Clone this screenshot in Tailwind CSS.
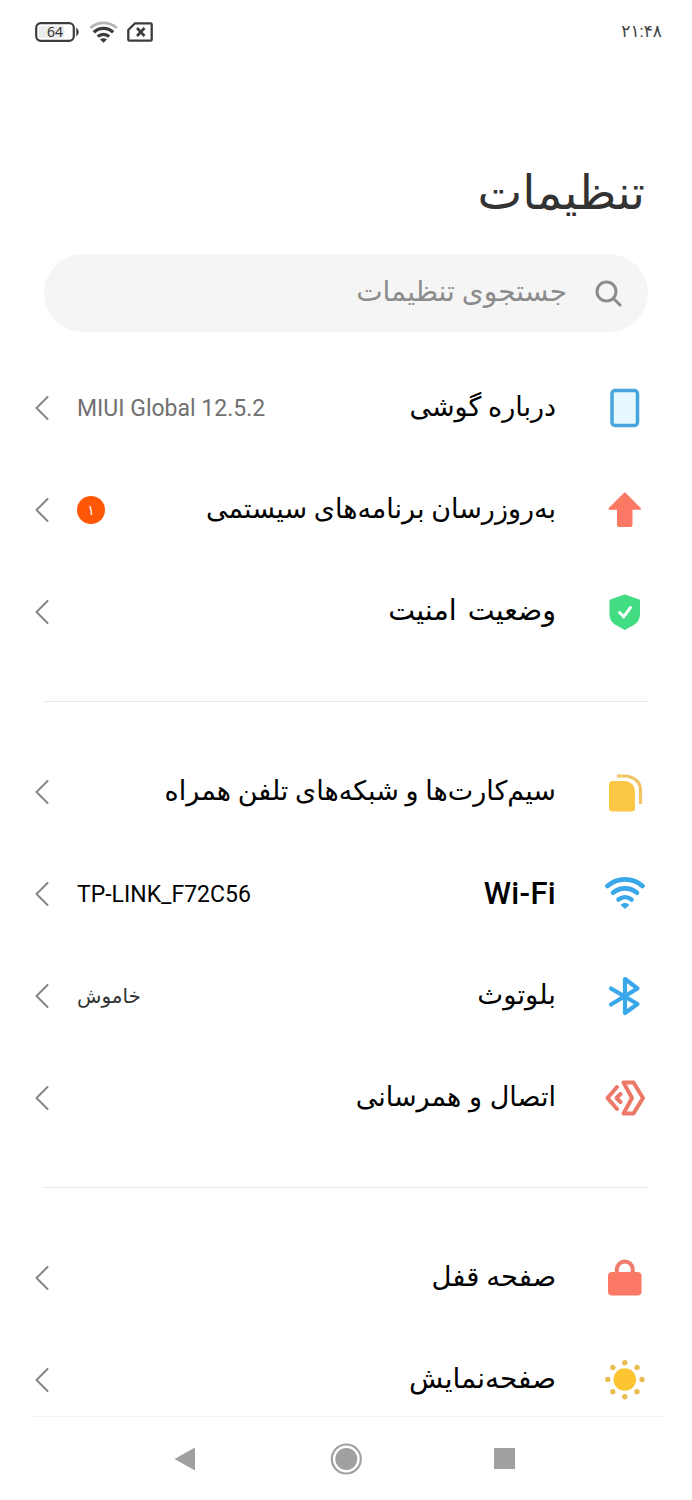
<!DOCTYPE html>
<html lang="fa" dir="rtl">
<head>
<meta charset="utf-8">
<title>تنظیمات</title>
<script src="https://cdn.jsdelivr.net/npm/@tailwindcss/browser@4"></script>
</head>
<body class="bg-white font-[Roboto,'DejaVu_Sans',sans-serif] text-black">
<svg class="hidden"><symbol id="chev" viewBox="0 0 14 24"><path d="M12.5 1 1.500 12l11 11" fill="none" stroke="#858585" stroke-width="2" stroke-linecap="round" stroke-linejoin="round"/></symbol></svg>
<div class="flex h-[1500px] w-[692px] flex-col overflow-hidden">
  <header class="flex h-16 shrink-0 items-center justify-between pr-[30px] pl-[35px] text-[#444]">
    <span class="text-[17px]">۲۱:۴۸</span>
    <div class="flex items-center gap-[9px]" dir="ltr">
      <svg class="h-5 w-[45px]" viewBox="0 0 45 20"><rect x="1.200" y="1.200" width="37.600" height="17.600" rx="4.500" fill="#fff" stroke="#3c3c3c" stroke-width="2.200"/><path d="M4 4h25v12H4z" fill="#ececec"/><path d="M42 7.500q2 2.500 0 5z" fill="#3c3c3c" stroke="#3c3c3c" stroke-width="1.500"/><text x="20" y="15" text-anchor="middle" font-family="Noto Sans" font-size="14" fill="#333">64</text></svg>
      <svg class="h-[22px] w-[29px]" viewBox="0 0 29 22" fill="none" stroke="#3c3c3c" stroke-width="3.300"><path d="M1.300 7a19.500 19.500 0 0 1 26.400 0" stroke="#b5b5b5" stroke-width="2.800"/><path d="M4.800 11.300a14 14 0 0 1 19.400 0"/><path d="M8.800 15.600a8.500 8.500 0 0 1 11.400 0"/><path d="M11 18.500q3.500-2.500 7 0l-3.500 3.300z" fill="#3c3c3c" stroke="none"/></svg>
      <svg class="h-5 w-[26px]" viewBox="0 0 26 20" fill="none" stroke="#3c3c3c" stroke-width="2.300" stroke-linejoin="round"><path d="M8 1.300h15.500q1.200 0 1.200 1.200v15q0 1.200-1.200 1.200h-21q-1.200 0-1.200-1.200V8z"/><path d="m10 6 7.500 8m0-8-7.500 8" stroke-width="2.600"/></svg>
    </div>
  </header>
  <h1 class="mt-[96px] h-[94px] shrink-0 pr-[47px] text-[47.5px] leading-[66px] text-[#333]">تنظیمات</h1>
  <div class="mx-11 flex h-[78px] shrink-0 items-center rounded-full bg-[#f5f5f5] pr-[26px] text-[28px] text-[#8c8c8c]">
    <svg class="h-[27px] w-[27px]" viewBox="0 0 27 27" fill="none" stroke="#8c8c8c" stroke-width="3" stroke-linecap="round"><circle cx="11.500" cy="11.500" r="9.500"/><path d="m18.500 18.500 6.500 6.500"/></svg>
    <span class="mr-7 pb-0.5 tracking-normal">جستجوی تنظیمات</span>
  </div>
  <main class="min-h-0 flex-1 overflow-hidden pr-11 pl-[35px] pt-[25px] text-[27px]">
    <section class="pr-[3px]">
      <div class="flex h-[102px] items-center">
        <svg class="h-10 w-10" viewBox="0 0 40 40"><rect x="7" y="2.500" width="25.500" height="35" rx="3" fill="#e5f7ff" stroke="#45a5dc" stroke-width="3.500"/></svg>
        <span class="mr-[49px] pb-0.5">درباره گوشی</span>
        <span class="mr-auto ml-7 pt-[3px] text-[23px] text-[#707070]" dir="ltr">MIUI Global 12.5.2</span>
        <svg class="h-6 w-3.5"><use href="#chev"/></svg>
      </div>
      <div class="flex h-[102px] items-center">
        <svg class="h-10 w-10" viewBox="0 0 40 40"><path d="M19.800 3.500 35 18.800H26.500V35q0 1-1 1H14q-1 0-1-1V18.800H4.500z" fill="#fb7964" stroke="#fb7964" stroke-width="2" stroke-linejoin="round"/></svg>
        <span class="mr-[49px] pb-0.5">به‌روزرسان برنامه‌های سیستمی</span>
        <span class="mr-auto ml-7 flex size-7 items-center justify-center rounded-full bg-[#ff5706] text-[14px] text-white">۱</span>
        <svg class="h-6 w-3.5"><use href="#chev"/></svg>
      </div>
      <div class="flex h-[102px] items-center">
        <svg class="h-10 w-10" viewBox="0 0 40 40"><path d="M19.800 3.500 34 8.500V22q0 6-4.500 9.500L19.800 37 10 31.500Q5.500 28 5.500 22V8.500z" fill="#42dc83" stroke="#42dc83" stroke-width="2" stroke-linejoin="round"/><path d="m14.500 20.500 4.200 4.300 6.800-9.300" fill="none" stroke="#fff" stroke-width="3" stroke-linecap="round"/></svg>
        <span class="mr-[49px] pb-0.5 text-[28.5px] [word-spacing:4px]">وضعیت امنیت</span>
        <svg class="mr-auto h-6 w-3.5"><use href="#chev"/></svg>
      </div>
    </section>
    <hr class="mt-[38px] mb-[39px] ml-[9px] border-[#e8e8e8]">
    <section class="pr-[3px]">
      <div class="flex h-[102px] items-center">
        <svg class="h-10 w-10" viewBox="0 0 40 40"><path d="M7.500 9H21Q30 11 30 20V36q0 3.500-3.500 3.500H7.500Q4 39.500 4 36V12.500Q4 9 7.500 9z" fill="#fcc744"/><path d="M12 4H22Q35.500 7 35.500 18V32" fill="none" stroke="#f1c467" stroke-width="3.200"/></svg>
        <span class="mr-[49px] pb-0.5">سیم‌کارت‌ها و شبکه‌های تلفن همراه</span>
        <svg class="mr-auto h-6 w-3.5"><use href="#chev"/></svg>
      </div>
      <div class="flex h-[102px] items-center">
        <svg class="h-10 w-10" viewBox="0 0 40 40" fill="none" stroke="#3aa7ea" stroke-width="4.600" stroke-linecap="round"><path d="M2.500 12a26.500 26.500 0 0 1 35 0"/><path d="M8 18.800a18.500 18.500 0 0 1 24 0"/><path d="M13.500 25.500a10.500 10.500 0 0 1 13 0"/><path d="M16.500 31q3.500-2.500 7 0L20 34z" fill="#3aa7ea" stroke-width="1.500" stroke-linejoin="round"/></svg>
        <span class="mr-[49px] text-[31px] font-medium tracking-[0.3px]" dir="ltr">Wi-Fi</span>
        <span class="mr-auto ml-7 pt-[3px] text-[23px]" dir="ltr">TP-LINK_F72C56</span>
        <svg class="h-6 w-3.5"><use href="#chev"/></svg>
      </div>
      <div class="flex h-[102px] items-center">
        <svg class="h-10 w-10" viewBox="0 0 40 40" fill="none" stroke="#3aa7ea" stroke-width="4.200" stroke-linecap="round" stroke-linejoin="round"><path d="M6 12.500 32.500 28 20 37V3L32.500 12.500 6 28.500"/></svg>
        <span class="mr-[49px] pb-0.5 text-[27.5px]">بلوتوث</span>
        <span class="mr-auto ml-7 pb-px text-[20px] text-[#333]">خاموش</span>
        <svg class="h-6 w-3.5"><use href="#chev"/></svg>
      </div>
      <div class="flex h-[102px] items-center">
        <svg class="h-10 w-10" viewBox="0 0 40 40" fill="none" stroke="#ec7868" stroke-width="4" stroke-linecap="round" stroke-linejoin="round"><path d="M18.500 4.500H28.500L38 20 28.500 35.500H18.500L27 20z"/><path d="M12 9 2.500 20 12 31"/><path d="m15.500 16-4 4 4 4"/></svg>
        <span class="mr-[49px] pb-0.5 [word-spacing:1px]">اتصال و همرسانی</span>
        <svg class="mr-auto h-6 w-3.5"><use href="#chev"/></svg>
      </div>
    </section>
    <hr class="mt-[38px] mb-[39px] ml-[9px] border-[#e8e8e8]">
    <section class="pr-[3px]">
      <div class="flex h-[102px] items-center">
        <svg class="h-10 w-10" viewBox="0 0 40 40"><rect x="3" y="14" width="33.500" height="23.500" rx="4" fill="#fb7964"/><path d="M11.800 16V11.500a8 8 0 0 1 16 0V16" fill="none" stroke="#f07c6c" stroke-width="4"/></svg>
        <span class="mr-[49px] pb-0.5 text-[27.5px]">صفحه قفل</span>
        <svg class="mr-auto h-6 w-3.5"><use href="#chev"/></svg>
      </div>
      <div class="flex h-[102px] items-center">
        <svg class="h-10 w-10" viewBox="0 0 40 40" fill="#e9bd52"><circle cx="19.800" cy="19.500" r="11.300" fill="#fcc531"/><circle cx="19.800" cy="2.700" r="2.700"/><circle cx="19.800" cy="36.700" r="2.700"/><circle cx="2.800" cy="19.500" r="2.700"/><circle cx="37" cy="19.500" r="2.700"/><circle cx="7.800" cy="7.500" r="2.700"/><circle cx="32" cy="7.500" r="2.700"/><circle cx="7.800" cy="31.700" r="2.700"/><circle cx="32" cy="31.700" r="2.700"/></svg>
        <span class="mr-[49px] pb-0.5 text-[28px]">صفحه‌نمایش</span>
        <svg class="mr-auto h-6 w-3.5"><use href="#chev"/></svg>
      </div>
    </section>
  </main>
  <nav class="mr-[29px] ml-8 flex h-[84px] shrink-0 items-center border-t border-[#f3f3f3] pl-[142px]" dir="ltr">
    <svg class="h-6 w-[22px]" viewBox="0 0 22 24"><path d="M.500 12 21 .500v23z" fill="#a0a0a0"/></svg>
    <svg class="ml-[134px] size-8" viewBox="0 0 32 32"><circle cx="16.300" cy="16" r="14.500" fill="none" stroke="#a0a0a0" stroke-width="2.200"/><circle cx="16.300" cy="16" r="11" fill="#a0a0a0"/></svg>
    <span class="ml-[132px] size-[21px] bg-[#a0a0a0]"></span>
  </nav>
</div>
</body></html>
